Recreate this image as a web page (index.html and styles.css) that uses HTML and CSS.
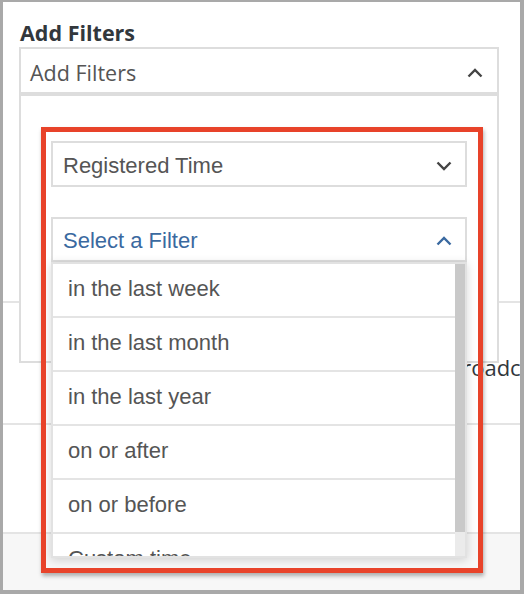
FILE: index.html
```html
<!DOCTYPE html>
<html>
<head>
<meta charset="utf-8">
<link rel="stylesheet" href="styles.css">
</head>
<body>
<div class="frame">
  <h2 class="title">Add Filters</h2>
  <div class="af">
    <div class="af-head">
      <span class="af-label">Add Filters</span>
      <svg class="chev" width="16" height="10" viewBox="0 0 16 10"><polyline points="1.5,8.5 8,2 14.5,8.5" fill="none" stroke="#444" stroke-width="2.4"/></svg>
    </div>
    <div class="panel">
      <div class="sel">
        <span class="sel-text">Registered Time</span>
        <svg class="chev" width="16" height="10" viewBox="0 0 16 10"><polyline points="1.5,1.5 8,8 14.5,1.5" fill="none" stroke="#444" stroke-width="2.4"/></svg>
      </div>
      <div class="sel sel2">
        <span class="sel-text blue">Select a Filter</span>
        <svg class="chev" width="16" height="10" viewBox="0 0 16 10"><polyline points="1.5,8.5 8,2 14.5,8.5" fill="none" stroke="#3a69a0" stroke-width="2.4"/></svg>
        <div class="list">
          <div class="item">in the last week</div>
          <div class="item">in the last month</div>
          <div class="item">in the last year</div>
          <div class="item">on or after</div>
          <div class="item">on or before</div>
          <div class="item">Custom time</div>
          <div class="scroll"><div class="thumb"></div></div>
        </div>
      </div>
    </div>
  </div>
  <div class="row row1"></div>
  <div class="row row2"><span class="bg-text">Broadcast</span></div>
  <div class="row row3"></div>
  <div class="footer"></div>
  <div class="highlight"></div>
</div>
</body>
</html>
```
FILE: styles.css
```css
html, body {
  margin: 0;
  padding: 0;
  background: #fff;
}
.frame {
  width: 524px;
  height: 594px;
  box-sizing: border-box;
  border-style: solid;
  border-color: #a9a9a9;
  border-width: 2px 4px 4px 3px;
  position: relative;
  overflow: hidden;
  background: #fff;
  display: flex;
  flex-direction: column;
}
.title {
  margin: 18px 0 0 17px;
  font-family: "Open Sans", sans-serif;
  font-weight: 700;
  font-size: 21.5px;
  line-height: 26px;
  color: #32373c;
  height: 26px;
}
.af {
  position: relative;
  margin: 1px 0 0 16px;
  width: 480px;
  z-index: 3;
}
.af-head {
  height: 47px;
  box-sizing: border-box;
  border: 2px solid #ddd;
  display: flex;
  align-items: center;
  justify-content: space-between;
  padding: 4px 14px 0 9px;
  background: #fff;
}
.af-label {
  font-family: "Open Sans", sans-serif;
  font-size: 21.5px;
  line-height: 26px;
  color: #555;
}
.chev {
  display: block;
  flex: none;
}
.panel {
  position: absolute;
  top: 47px;
  left: 0;
  width: 480px;
  height: 269px;
  box-sizing: border-box;
  border: 2px solid #ddd;
  background: #fff;
  padding: 45px 30px 0;
}
.sel {
  position: relative;
  height: 46px;
  box-sizing: border-box;
  border: 2px solid #ddd;
  display: flex;
  align-items: center;
  justify-content: space-between;
  padding: 3px 13px 0 10px;
  background: #fff;
}
.sel2 {
  margin-top: 30px;
  height: 45px;
}
.sel-text {
  font-family: "Liberation Sans", Arial, sans-serif;
  font-size: 22px;
  line-height: 26px;
  color: #555;
}
.sel-text.blue {
  color: #3a69a0;
}
.list {
  position: absolute;
  top: calc(100% + 2px);
  left: -2px;
  right: -2px;
  height: 296px;
  box-sizing: border-box;
  border: 2px solid #e2e2e2;
  background: #fff;
  overflow: hidden;
  box-shadow: 0 2px 9px rgba(0,0,0,0.16);
}
.item {
  height: 54px;
  box-sizing: border-box;
  border-bottom: 2px solid #e4e4e4;
  display: flex;
  align-items: center;
  padding: 0 0 3px 15px;
  font-family: "Liberation Sans", Arial, sans-serif;
  font-size: 22px;
  line-height: 26px;
  color: #555;
}
.scroll {
  position: absolute;
  top: 0;
  right: 0;
  bottom: 0;
  width: 10px;
  background: #ebebeb;
}
.thumb {
  height: 268px;
  background: #c9c9c9;
}
.row {
  box-sizing: border-box;
  border-bottom: 2px solid #e4e4e4;
  flex: none;
}
.row1 {
  height: 209px;
}
.row2 {
  height: 122px;
  padding: 51px 0 0 445px;
  white-space: nowrap;
}
.bg-text {
  font-family: "Open Sans", sans-serif;
  font-size: 22px;
  line-height: 26px;
  color: #32373c;
}
.row3 {
  height: 107px;
  border-bottom: none;
}
.footer {
  flex: 1;
  background: #f7f7f7;
  border-top: 2px solid #e4e4e4;
}
.highlight {
  position: absolute;
  left: 38px;
  top: 125px;
  width: 442px;
  height: 446px;
  box-sizing: border-box;
  border: 5px solid #e8432a;
  box-shadow: 1px 3px 4px rgba(0,0,0,0.3);
  z-index: 5;
}
```
